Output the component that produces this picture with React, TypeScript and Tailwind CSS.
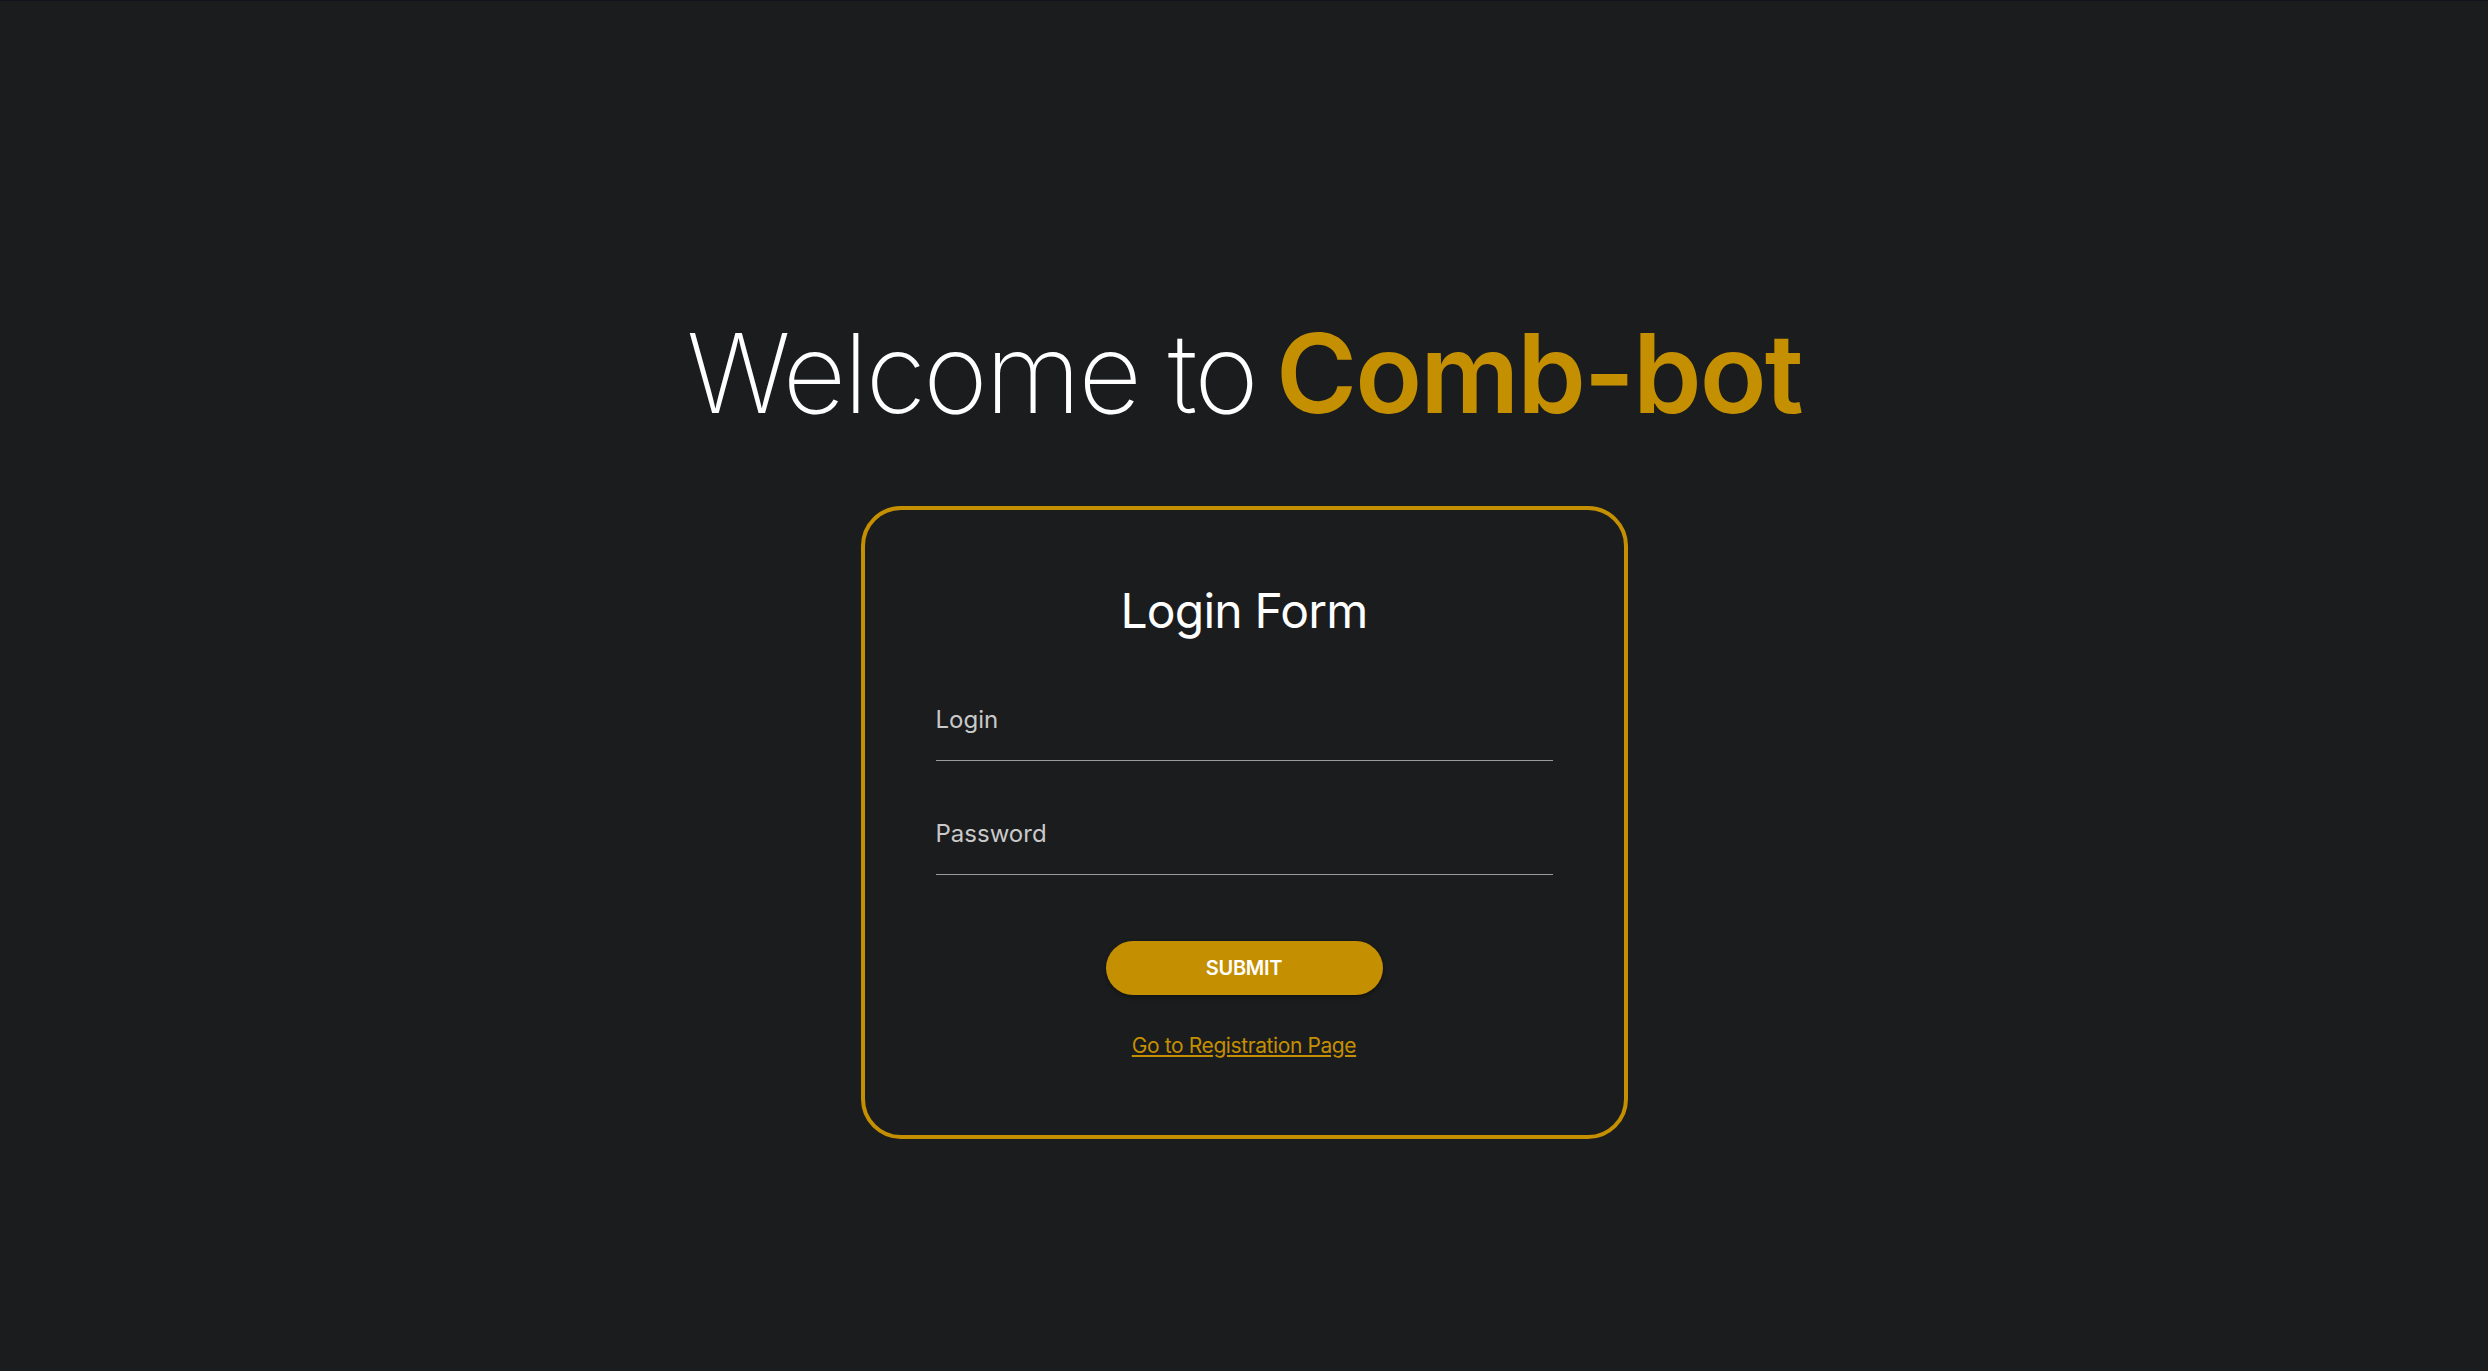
export default function App() {
  return (
    <div className="min-h-screen border-t border-[#0f1420] bg-[#1b1c1e] font-['Inter',sans-serif]">
      <div className="flex flex-col items-center pt-[317px]">
        <h1 className="text-[110px] leading-none tracking-[-2.5px] text-white">
          <span className="font-extralight">Welcome to</span>
          <span className="ml-[20px] font-semibold tracking-[-2px] text-[#c48f00]">Comb-bot</span>
        </h1>

        <form className="mt-[78px] w-[767px] rounded-[40px] border-4 border-[#c48f00] px-[71px] pt-[77px] pb-[76px]">
          <h2 className="text-center text-[48px] leading-none font-normal tracking-[-0.8px] text-white">
            Login Form
          </h2>

          <div className="mt-[73px] border-b border-[#9b9b9b] pb-[28px]">
            <span className="block text-[24px] leading-none text-[#c9c9c9]">Login</span>
          </div>

          <div className="mt-[61px] border-b border-[#9b9b9b] pb-[28px]">
            <span className="block text-[24px] leading-none text-[#c9c9c9]">Password</span>
          </div>

          <div className="mt-[66px] flex justify-center">
            <button
              type="button"
              className="h-[54px] w-[277px] rounded-full bg-[#c48f00] text-[20px] font-semibold tracking-[-0.3px] text-white shadow-[0_2px_4px_rgba(0,0,0,0.35)]"
            >
              SUBMIT
            </button>
          </div>

          <div className="mt-[40px] text-center">
            <a className="text-[21px] leading-none tracking-[-0.4px] text-[#c48f00] underline underline-offset-2">
              Go to Registration Page
            </a>
          </div>
        </form>
      </div>
    </div>
  );
}
